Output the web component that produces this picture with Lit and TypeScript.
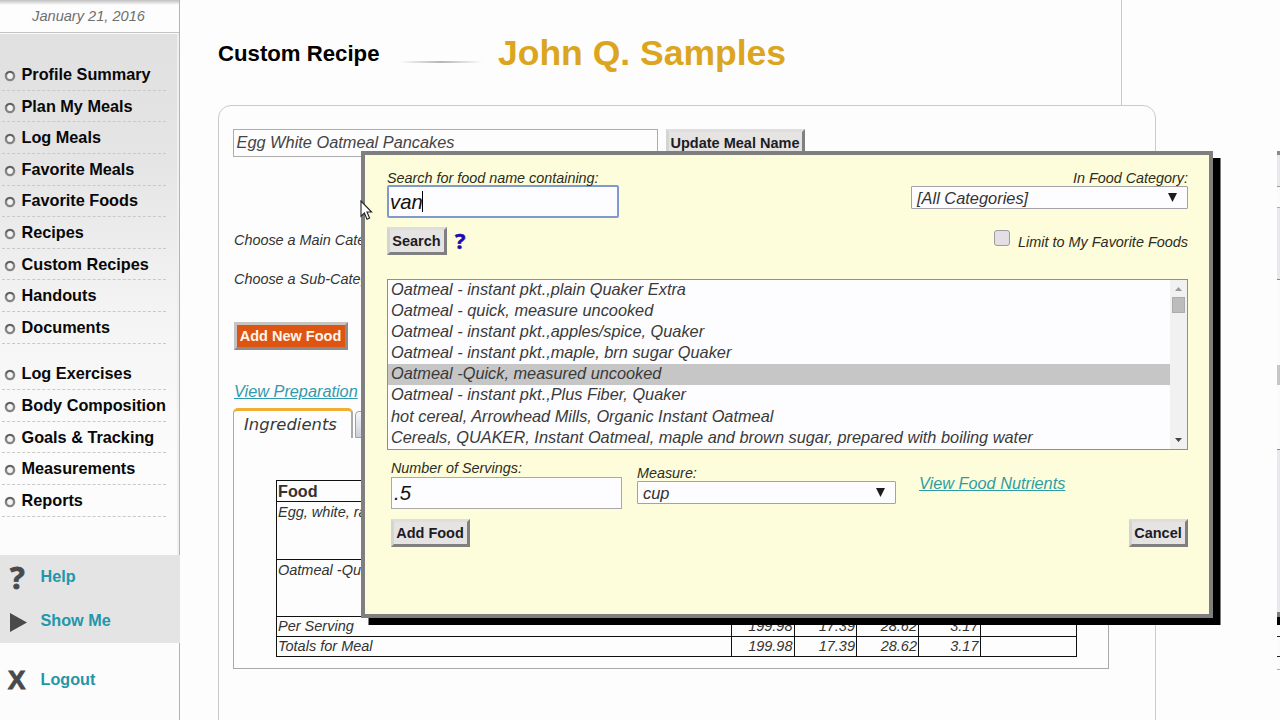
import { LitElement, html, css, svg } from "lit";
import { customElement, property } from "lit/decorators.js";
import { classMap } from "lit/directives/class-map.js";

const MEALS = ["Profile Summary", "Plan My Meals", "Log Meals", "Favorite Meals", "Favorite Foods", "Recipes", "Custom Recipes", "Handouts", "Documents"];
const TRACKING = ["Log Exercises", "Body Composition", "Goals & Tracking", "Measurements", "Reports"];
const FOODS = [
  "Oatmeal - instant pkt.,plain Quaker Extra",
  "Oatmeal - quick, measure uncooked",
  "Oatmeal - instant pkt.,apples/spice, Quaker",
  "Oatmeal - instant pkt.,maple, brn sugar Quaker",
  "Oatmeal -Quick, measured uncooked",
  "Oatmeal - instant pkt.,Plus Fiber, Quaker",
  "hot cereal, Arrowhead Mills, Organic Instant Oatmeal",
  "Cereals, QUAKER, Instant Oatmeal, maple and brown sugar, prepared with boiling water",
];
const TOTALS = ["199.98", "17.39", "28.62", "3.17", ""];

const triangle = (points: string, w: number, h: number, fill: string) =>
  html`<svg width=${w} height=${h} viewBox="0 0 ${w} ${h}">${svg`<polygon points=${points} fill=${fill} />`}</svg>`;

@customElement("side-nav")
export class SideNav extends LitElement {
  static styles = css`
    :host { display: flex; flex-direction: column; box-sizing: border-box; height: 720px; border-right: 1.5px solid #b4b4b4; background: #fcfcfc; }
    .date { box-sizing: border-box; height: 33px; padding: 0 2px 0 0; border-bottom: 1.5px solid #c4c4c4; background: linear-gradient(#c0c0c0, #fdfdfd 5px);
      font-size: 14.6px; line-height: 32px; text-align: center; font-style: italic; color: #6f6f6f; }
    .menu { box-sizing: border-box; height: 522px; padding: 25.2px 0 0 2px; border-top: 1px solid #fafafa; border-right: 2px solid #f0f0f0;
      background: linear-gradient(#e0e0e0, #e5e5e5 130px, #f4f4f4 280px, #fcfcfc 430px); }
    .group { margin-bottom: 15px; }
    .item { display: flex; align-items: center; box-sizing: border-box; width: 164px; height: 31.6px; gap: 6px;
      border-bottom: 1px dashed #c9c9c9; font-weight: bold; font-size: 16.25px; color: #080808; white-space: nowrap; padding-left: 1.5px; }
    .item svg { flex: none; margin-top: 3px; }
    .band { height: 88px; background: #e4e4e4; margin-right: -1px; }
    .row { display: flex; align-items: center; box-sizing: border-box; height: 44px; padding-bottom: 2px; font-weight: bold; font-size: 16.2px; color: #2396ab; }
    .glyph { width: 37px; box-sizing: border-box; padding-left: 10px; display: flex; color: #4a4a4a; margin-right: 3.5px; }
    .glyph svg { margin-top: 4px; }
    .mark { font: bold 31px/32px "Open Sans", sans-serif; -webkit-text-stroke: 0.8px #4a4a4a; margin-top: 1px; }
    .cross { font: bold 26px/26px "Liberation Sans", sans-serif; -webkit-text-stroke: 1px #4a4a4a; margin-left: -2px; margin-top: 2px; }
    .last { margin-top: 15px; }
  `;
  bullet() {
    return html`<svg width="12" height="12" viewBox="0 0 12 12">
      <circle cx="6" cy="6" r="4.1" fill="#f4f4f4" stroke="#858585" stroke-width="2.4" />
      <path d="M2 4.5 A4.3 4.3 0 0 1 9.5 3.6" fill="none" stroke="#5c5c5c" stroke-width="1.6" />
    </svg>`;
  }
  group(names: string[]) {
    return html`<div class="group">${names.map((n) => html`<div class="item">${this.bullet()}<span>${n}</span></div>`)}</div>`;
  }
  render() {
    return html`
      <div class="date">January 21, 2016</div>
      <div class="menu">${this.group(MEALS)}${this.group(TRACKING)}</div>
      <div class="band">
        <div class="row"><span class="glyph"><span class="mark">?</span></span>Help</div>
        <div class="row"><span class="glyph">${triangle("0,0 17,9.5 0,19", 17, 19, "#4a4a4a")}</span>Show Me</div>
      </div>
      <div class="row last"><span class="glyph"><span class="cross">X</span></span>Logout</div>
    `;
  }
}

@customElement("bevel-button")
export class BevelButton extends LitElement {
  @property() label = "";
  @property({ type: Boolean }) hot = false;
  static styles = css`
    :host { display: inline-block; }
    .btn { box-sizing: border-box; height: 28px; border: 3px solid; border-color: #dedede #808080 #808080 #d4d4d4; background: #e6e3e3;
      font-weight: bold; font-size: 14.5px; line-height: 23px; font-style: normal; color: #1c1c24; text-align: center; white-space: nowrap; text-indent: -1px; }
    .hot { background: #dd5511; color: #fff5ec; border-color: #c8c4c0 #8c8c8c #8c8c8c #c4c4c4; }
  `;
  render() {
    return html`<div class=${classMap({ btn: true, hot: this.hot })}>${this.label}</div>`;
  }
}

@customElement("food-dialog")
export class FoodDialog extends LitElement {
  static styles = css`
    :host { display: block; box-sizing: border-box; width: 852px; height: 467px; border: 4px solid #7f7f7f; background: #fdfddb;
      box-shadow: 7.5px 7px 0 #000; padding: 14px 21px 0 22px; font-style: italic; color: #222; }
    .top { display: flex; justify-content: space-between; height: 110px; }
    .label { font-size: 14.37px; line-height: 18px; white-space: nowrap; color: #2c2c22; }
    .text { box-sizing: border-box; width: 231px; height: 32px; border: 1px solid #a9a9a9; background: #fdfdff; font-size: 20.3px; line-height: 30px; padding-left: 2px; color: #111; display: flex; align-items: center; }
    .focus { width: 232px; height: 33px; border: 2px solid #8299cf; border-radius: 2px; margin-top: -2px; padding-left: 1px; line-height: 28px; }
    .caret { width: 1px; height: 21px; background: #000; margin-left: -1px; }
    .actions { display: flex; margin-top: 9px; }
    .search { width: 60px; }
    .ask { margin-left: 8px; font: bold 22px/26px "Open Sans", sans-serif; -webkit-text-stroke: 0.5px #1c0cb4; color: #1c0cb4; }
    .right { display: flex; flex-direction: column; align-items: flex-end; }
    .select { box-sizing: border-box; display: flex; align-items: center; justify-content: space-between; height: 23px; border: 1px solid #a2a2a8; border-radius: 1px; background: #fdfdff; font-size: 16.4px; line-height: 20px; padding: 0 10px 0 5px; color: #333; margin-top: -1px; }
    .category { width: 277px; }
    .limit { display: flex; gap: 8px; margin-top: 20px; }
    .check { box-sizing: border-box; width: 16px; height: 16px; border: 1.5px solid #9d9aa0; border-radius: 3px; background: #e3dfe4; margin: 1px 0 0 0; }
    .limit .label { margin-top: 4px; font-size: 14.43px; }
    .list { display: flex; box-sizing: border-box; height: 171px; border: 1px solid #8f8f8f; background: #fdfdff; }
    .rows { flex: 1; }
    .food { height: 21.1px; line-height: 18.4px; font-size: 16.34px; padding-left: 3px; color: #3a3a3a; white-space: nowrap; }
    .picked { background: #c6c6c6; }
    .bar { display: flex; flex-direction: column; align-items: center; width: 17px; background: #f1f1f2; padding: 7px 0 7px; box-sizing: border-box; }
    .thumb { width: 13px; height: 16px; background: #bcbcbc; margin-top: 6px; box-shadow: inset 0 0 0 1px #acacac; }
    .down { margin-top: auto; display: flex; }
    .up { display: flex; }
    .fields { display: flex; padding-left: 4px; margin-top: 9px; height: 60px; }
    .measure { margin: 5px 23px 0 15px; }
    .unit { width: 259px; }
    .link { font-size: 16.3px; line-height: 20px; color: #2d9da3; text-decoration: underline; margin-top: 14px; }
    .foot { display: flex; justify-content: space-between; padding-left: 4px; }
    .add { width: 79px; }
    .cancel { width: 59px; }
  `;
  render() {
    return html`
      <div class="top">
        <div>
          <div class="label">Search for food name containing:</div>
          <div class="text focus">van<span class="caret"></span></div>
          <div class="actions"><bevel-button class="search" label="Search"></bevel-button><span class="ask">?</span></div>
        </div>
        <div class="right">
          <div class="label">In Food Category:</div>
          <div class="select category">[All Categories]${triangle("0,0 9,0 4.5,9", 9, 9, "#1c1c1c")}</div>
          <div class="limit"><span class="check"></span><span class="label">Limit to My Favorite Foods</span></div>
        </div>
      </div>
      <div class="list">
        <div class="rows">${FOODS.map((f, i) => html`<div class=${classMap({ food: true, picked: i === 4 })}>${f}</div>`)}</div>
        <div class="bar">
          <span class="up">${triangle("0,4 3.5,0 7,4", 7, 4, "#9a9a9a")}</span>
          <span class="thumb"></span>
          <span class="down">${triangle("0,0 7,0 3.5,4", 7, 4, "#444")}</span>
        </div>
      </div>
      <div class="fields">
        <div>
          <div class="label">Number of Servings:</div>
          <div class="text">.5</div>
        </div>
        <div class="measure">
          <div class="label">Measure:</div>
          <div class="select unit">cup${triangle("0,0 9,0 4.5,9", 9, 9, "#1c1c1c")}</div>
        </div>
        <div class="link">View Food Nutrients</div>
      </div>
      <div class="foot">
        <bevel-button class="add" label="Add Food"></bevel-button>
        <bevel-button class="cancel" label="Cancel"></bevel-button>
      </div>
    `;
  }
}

@customElement("app-root")
export class AppRoot extends LitElement {
  static styles = css`
    :host { display: grid; grid-template-columns: 180px 1fr; position: relative; width: 1280px; height: 720px; overflow: hidden; background: #fdfdfd; font-family: "Liberation Sans", Arial, sans-serif; }
    .main { display: flex; flex-direction: column; padding-left: 38px; height: 720px; box-sizing: border-box; }
    .head { display: flex; flex: none; box-sizing: border-box; width: 904px; height: 105px; border-right: 1.5px solid #c9c9c9; }
    .title { font-size: 22.2px; font-weight: bold; line-height: 30px; margin-top: 39px; width: 181px; color: #000; white-space: nowrap; }
    .rule { width: 84px; height: 2px; margin-top: 61px; background: linear-gradient(90deg, #fdfdfd, #b5b5b5 50%, #fdfdfd); }
    .name { font-size: 35.5px; font-weight: bold; line-height: 44px; margin: 31px 0 0 15px; color: #dba520; white-space: nowrap; }
    .card { box-sizing: border-box; width: 938px; height: 640px; flex: none; border: 1px solid #cbcbcb; border-radius: 13px; padding: 23px 0 0 14px; font-style: italic; }
    .meal { display: flex; gap: 8px; }
    .field { box-sizing: border-box; width: 425px; height: 28px; border: 1px solid #adadad; font-size: 16.35px; line-height: 25px; padding-left: 2.5px; color: #444; }
    .update { width: 139px; }
    .choose { font-size: 14.4px; line-height: 20px; color: #333; white-space: nowrap; width: 260px; overflow: hidden; padding-left: 1px; }
    .main-cat { margin-top: 73px; }
    .sub-cat { margin-top: 19px; }
    .new { display: block; width: 114px; margin: 33px 0 0 1px; }
    .prep { display: block; width: 240px; font-size: 16.3px; line-height: 20px; margin: 31px 0 0 1px; color: #3199ae; text-decoration: underline; white-space: nowrap; }
    .tabs { display: flex; gap: 2px; margin-top: 7px; height: 30px; }
    .tab { box-sizing: border-box; width: 120px; border: 1px solid #a9a9a9; border-width: 3px 2px 0 1px; border-top-color: #f0ae34; border-radius: 5px 5px 0 0; font: italic 16.4px/27px "DejaVu Sans", sans-serif; padding-left: 10px; color: #383838; }
    .idle { box-sizing: border-box; width: 100px; height: 27px; margin-top: 3px; border: 1px solid #a0a0a8; border-radius: 4px 4px 0 0; background: linear-gradient(#f6f6fa, #cfcfdc); }
    .panel { box-sizing: border-box; width: 876px; height: 231px; border: 1px solid #a9a9a9; border-top: 0; padding: 42px 0 0 42px; }
    .table { width: 799px; border: 1px solid #111; border-bottom: 0; }
    .line { display: grid; grid-template-columns: 455px 61.5px 61.5px 61px 60.5px 1fr; column-gap: 1px; box-sizing: border-box; border-bottom: 1px solid #111; font-size: 14.5px; line-height: 17px; color: #333; }
    .cell { border-right: 1px solid #111; padding: 0 1px; text-align: right; }
    .cell:first-child { text-align: left; }
    .cell:last-child { border-right: 0; }
    .food { font: bold 16.2px/20px "Liberation Sans", Arial, sans-serif; height: 21px; padding-left: 1px; }
    .tall { height: 57.5px; padding: 2px 0 0 1px; }
    .short { height: 20px; line-height: 19px; }
    .dialog { position: absolute; left: 361px; top: 151px; }
    .pointer { position: absolute; left: 360px; top: 200px; }
    .sliver { position: absolute; left: 1277px; top: 151px; width: 3px; height: 519px;
      background: linear-gradient(#8a8a8a 0 4px, #e8e8ee 4px 35px, #999 35px 36px, #fbfbfb 36px 56px, #aaa 56px 57px, #e8e8ee 57px 128px, #888 128px 129px, #fbfbfb 129px 214px, #c6c6c6 214px 234px, #fbfbfb 234px 298px, #888 298px 299px, #e8e8ee 299px 461px, #7f7f7f 461px 466px, #000 466px 474px, #fbfbfb 474px 485px, #222 485px 486px, #fbfbfb 486px 505px, #222 505px 506px, #fbfbfb 506px 518px, #aaa 518px); }
  `;
  total(name: string) {
    return html`<div class="line short"><span class="cell">${name}</span>${TOTALS.map((t) => html`<span class="cell">${t}</span>`)}</div>`;
  }
  render() {
    return html`
      <side-nav></side-nav>
      <div class="main">
        <div class="head">
          <div class="title">Custom Recipe</div>
          <div class="rule"></div>
          <div class="name">John Q. Samples</div>
        </div>
        <div class="card">
          <div class="meal">
            <div class="field">Egg White Oatmeal Pancakes</div>
            <bevel-button class="update" label="Update Meal Name"></bevel-button>
          </div>
          <div class="choose main-cat">Choose a Main Category:</div>
          <div class="choose sub-cat">Choose a Sub-Category:</div>
          <bevel-button class="new" hot label="Add New Food"></bevel-button>
          <span class="prep">View Preparation</span>
          <div class="tabs"><div class="tab">Ingredients</div><div class="idle"></div></div>
          <div class="panel">
            <div class="table">
              <div class="line food">Food</div>
              <div class="line tall">Egg, white, raw</div>
              <div class="line tall">Oatmeal -Quick</div>
              ${this.total("Per Serving")}${this.total("Totals for Meal")}
            </div>
          </div>
        </div>
      </div>
      <food-dialog class="dialog"></food-dialog>
      <svg class="pointer" width="13" height="21" viewBox="0 0 13 21"><path d="M1 1 V16.2 L4.4 13 L7 19.2 L9.6 18 L7 12 H11.6 Z" fill="#fff" stroke="#222" stroke-width="1.1" /></svg>
      <div class="sliver"></div>
    `;
  }
}
